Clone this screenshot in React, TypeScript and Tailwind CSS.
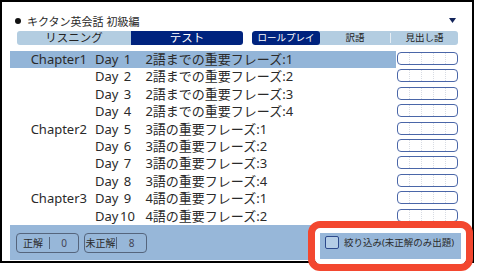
import React from "react";

const rows = [
  { ch: "Chapter1", day: "1", title: "2語までの重要フレーズ:1" },
  { ch: "", day: "2", title: "2語までの重要フレーズ:2" },
  { ch: "", day: "3", title: "2語までの重要フレーズ:3" },
  { ch: "", day: "4", title: "2語までの重要フレーズ:4" },
  { ch: "Chapter2", day: "5", title: "3語の重要フレーズ:1" },
  { ch: "", day: "6", title: "3語の重要フレーズ:2" },
  { ch: "", day: "7", title: "3語の重要フレーズ:3" },
  { ch: "", day: "8", title: "3語の重要フレーズ:4" },
  { ch: "Chapter3", day: "9", title: "4語の重要フレーズ:1" },
  { ch: "", day: "10", title: "4語の重要フレーズ:2" },
];

function AnswerBox() {
  return (
    <div className="w-[61px] h-[13px] mt-[1px] border border-[#4a66a8] rounded-[4px] bg-white flex">
      {[0, 1, 2, 3, 4].map((i) => (
        <div
          key={i}
          className={"flex-1 " + (i < 4 ? "border-r border-dotted border-[#d8dce4]" : "")}
        />
      ))}
    </div>
  );
}

export default function App() {
  return (
    <div className="w-[480px] h-[272px] bg-white relative overflow-hidden font-['Noto_Sans','Noto_Sans_CJK_JP',sans-serif] text-[#2a2a2a]">
      <div className="w-[474px] h-[263px] border-2 border-black flex flex-col">
        {/* header */}
        <div className="h-[29px] flex items-center pl-[13px] pr-[16px] pt-[9px]">
          <span className="w-[6px] h-[6px] rounded-full bg-[#111] mr-[6px]" />
          <span className="text-[11px] leading-none">キクタン英会話 初級編</span>
          <div className="flex-1" />
          <svg width="7" height="5" viewBox="0 0 7 5" className="mt-[-2px]">
            <polygon points="0,0 7,0 3.5,5" fill="#13245a" />
          </svg>
        </div>
        {/* tabs */}
        <div className="h-[14px] flex pl-[15px] text-[11.5px] leading-none">
          <div className="w-[226px] flex rounded-[3px] overflow-hidden">
            <div className="w-[114px] bg-[#b3cde1] flex items-center justify-center text-[#222]">リスニング</div>
            <div className="flex-1 bg-[#00237e] flex items-center justify-center text-white">テスト</div>
          </div>
          <div className="ml-[9px] w-[206px] flex rounded-[3px] overflow-hidden bg-[#b3cde1] text-[9.5px]">
            <div className="w-[68px] bg-[#00237e] rounded-[3px] flex items-center justify-center text-white">ロールプレイ</div>
            <div className="w-[70px] flex items-center justify-center text-[#222]">訳語</div>
            <div className="w-[1px] my-[2px] bg-[#e6eef5]" />
            <div className="flex-1 flex items-center justify-center text-[#222]">見出し語</div>
          </div>
        </div>
        {/* list */}
        <div className="h-[174px] mt-[6px] pl-[8px] overflow-hidden text-[13px] leading-none">
          {rows.map((r, i) => (
            <div key={i} className="h-[17.4px] flex">
              <div className={"w-[386px] h-[17px] flex items-center " + (i === 0 ? "bg-[#93b5d8]" : "")}>
                <span className="w-[77px] text-right">{r.ch}</span>
                <span className="ml-[8px]">Day</span>
                <span className="w-[18px] text-center">{r.day}</span>
                <span className="ml-[9px]">{r.title}</span>
              </div>
              <div className="ml-[1px]">
                <AnswerBox />
              </div>
            </div>
          ))}
        </div>
        {/* bottom bar */}
        <div className="h-[35px] ml-[8px] w-[455px] bg-[#97b7d9] flex items-center pl-[6px] pr-[2px] text-[10px] leading-none">
          <div className="w-[63px] h-[20px] border border-[#55657d] rounded-[4px] flex items-center">
            <span className="w-[32px] text-center">正解</span>
            <span className="w-[1px] h-[12px] bg-[#55657d]" />
            <span className="flex-1 text-center text-[#445]">0</span>
          </div>
          <div className="ml-[5px] w-[63px] h-[20px] border border-[#55657d] rounded-[4px] flex items-center">
            <span className="w-[31px] text-center">未正解</span>
            <span className="w-[1px] h-[12px] bg-[#55657d]" />
            <span className="flex-1 text-center text-[#445]">8</span>
          </div>
          <div className="flex-1" />
          <div className="w-[141px] h-[25px] flex items-center pl-[3px] whitespace-nowrap">
            <span className="w-[14px] h-[13px] shrink-0 border-[1.5px] border-[#2d4a8c] rounded-[2px] bg-[#b4cde6]" />
            <span className="ml-[5px] text-[9.5px]">絞り込み(未正解のみ出題)</span>
          </div>
        </div>
      </div>
      {/* annotation */}
      <div className="absolute left-[308px] top-[221px] w-[165px] h-[50px] border-[7px] border-[#f3472f] rounded-[12px] shadow-[inset_0_0_0_5px_white]" />
    </div>
  );
}
